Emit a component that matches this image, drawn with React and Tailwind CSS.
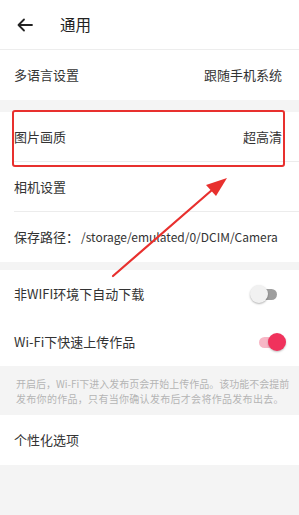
import React from "react";

const font = { fontFamily: '"Noto Sans CJK SC", "Noto Sans", sans-serif' };

function Row({ left, right, border, children }) {
  return (
    <div className={`h-[50px] flex items-center justify-between pr-[17px] ${border ? "border-b border-[#ececec]" : ""}`}>
      <span className="text-[13px] text-[#333]">{left}</span>
      {right && <span className="text-[13px] text-[#333]">{right}</span>}
      {children}
    </div>
  );
}

function Toggle({ on }) {
  return (
    <div className="relative w-[30px] h-[18px] flex items-center">
      {on ? (
        <>
          <div className="ml-[3px] w-[24px] h-[11px] rounded-full bg-[#f7b7c6]" />
          <div className="absolute right-0 w-[18px] h-[18px] rounded-full bg-[#f0325c] shadow-[0_1px_2px_rgba(0,0,0,0.25)]" />
        </>
      ) : (
        <>
          <div className="ml-[3px] w-[24px] h-[11px] rounded-full bg-[#9e9e9e]" />
          <div className="absolute left-0 w-[18px] h-[18px] rounded-full bg-[#f1f1f1] shadow-[0_1px_2px_rgba(0,0,0,0.3)]" />
        </>
      )}
    </div>
  );
}

export default function App() {
  return (
    <div className="relative w-[299px] h-[515px] bg-[#f4f4f4] overflow-hidden" style={font}>
      <div className="h-[50px] bg-white flex items-center border-b border-[#ededed]">
        <svg className="ml-[17px]" width="16" height="14" viewBox="0 0 16 14" fill="none" stroke="#222" strokeWidth="1.8" strokeLinecap="round" strokeLinejoin="round">
          <path d="M15 7H1.5M7 1.5L1.5 7L7 12.5" />
        </svg>
        <span className="ml-[27px] text-[15.5px] text-[#222]">通用</span>
      </div>
      <div className="bg-white pl-[14px]">
        <Row left="多语言设置" right="跟随手机系统" />
      </div>
      <div className="h-[12px]" />
      <div className="bg-white pl-[14px]">
        <Row left="图片画质" right="超高清" border />
        <Row left="相机设置" border />
        <div className="h-[50px] flex items-center text-[13px] text-[#333]">
          <span>保存路径：</span>
          <span className="ml-[2px] text-[12px]">/storage/emulated/0/DCIM/Camera</span>
        </div>
      </div>
      <div className="h-[8px]" />
      <div className="bg-white pl-[14px]">
        <div className="h-[48px] flex items-center justify-between pr-[19px]">
          <span className="text-[13px] text-[#333]">非WIFI环境下自动下载</span>
          <Toggle on={false} />
        </div>
        <div className="h-[48px] flex items-center justify-between pr-[13px]">
          <span className="text-[13px] text-[#333]">Wi-Fi下快速上传作品</span>
          <Toggle on />
        </div>
      </div>
      <div className="h-[49px] pl-[16px] pt-[10px] text-[10px] leading-[15px] text-[#b5b5b5] whitespace-nowrap">
        <div>开启后，Wi-Fi下进入发布页会开始上传作品。该功能不会提前</div>
        <div className="tracking-[0.3px]">发布你的作品，只有当你确认发布后才会将作品发布出去。</div>
      </div>
      <div className="bg-white pl-[14px]">
        <Row left="个性化选项" />
      </div>

      <div className="absolute left-[12px] top-[110px] w-[273px] h-[57px] border-2 border-[#e8302e] rounded-[3px]" />
      <svg className="absolute left-0 top-0" width="299" height="515" viewBox="0 0 299 515">
        <path d="M113 276 L212 190" stroke="#e8302e" strokeWidth="2.2" strokeLinecap="round" />
        <path d="M227 178 L206 185 L216 196 Z" fill="#e8302e" />
      </svg>
    </div>
  );
}
